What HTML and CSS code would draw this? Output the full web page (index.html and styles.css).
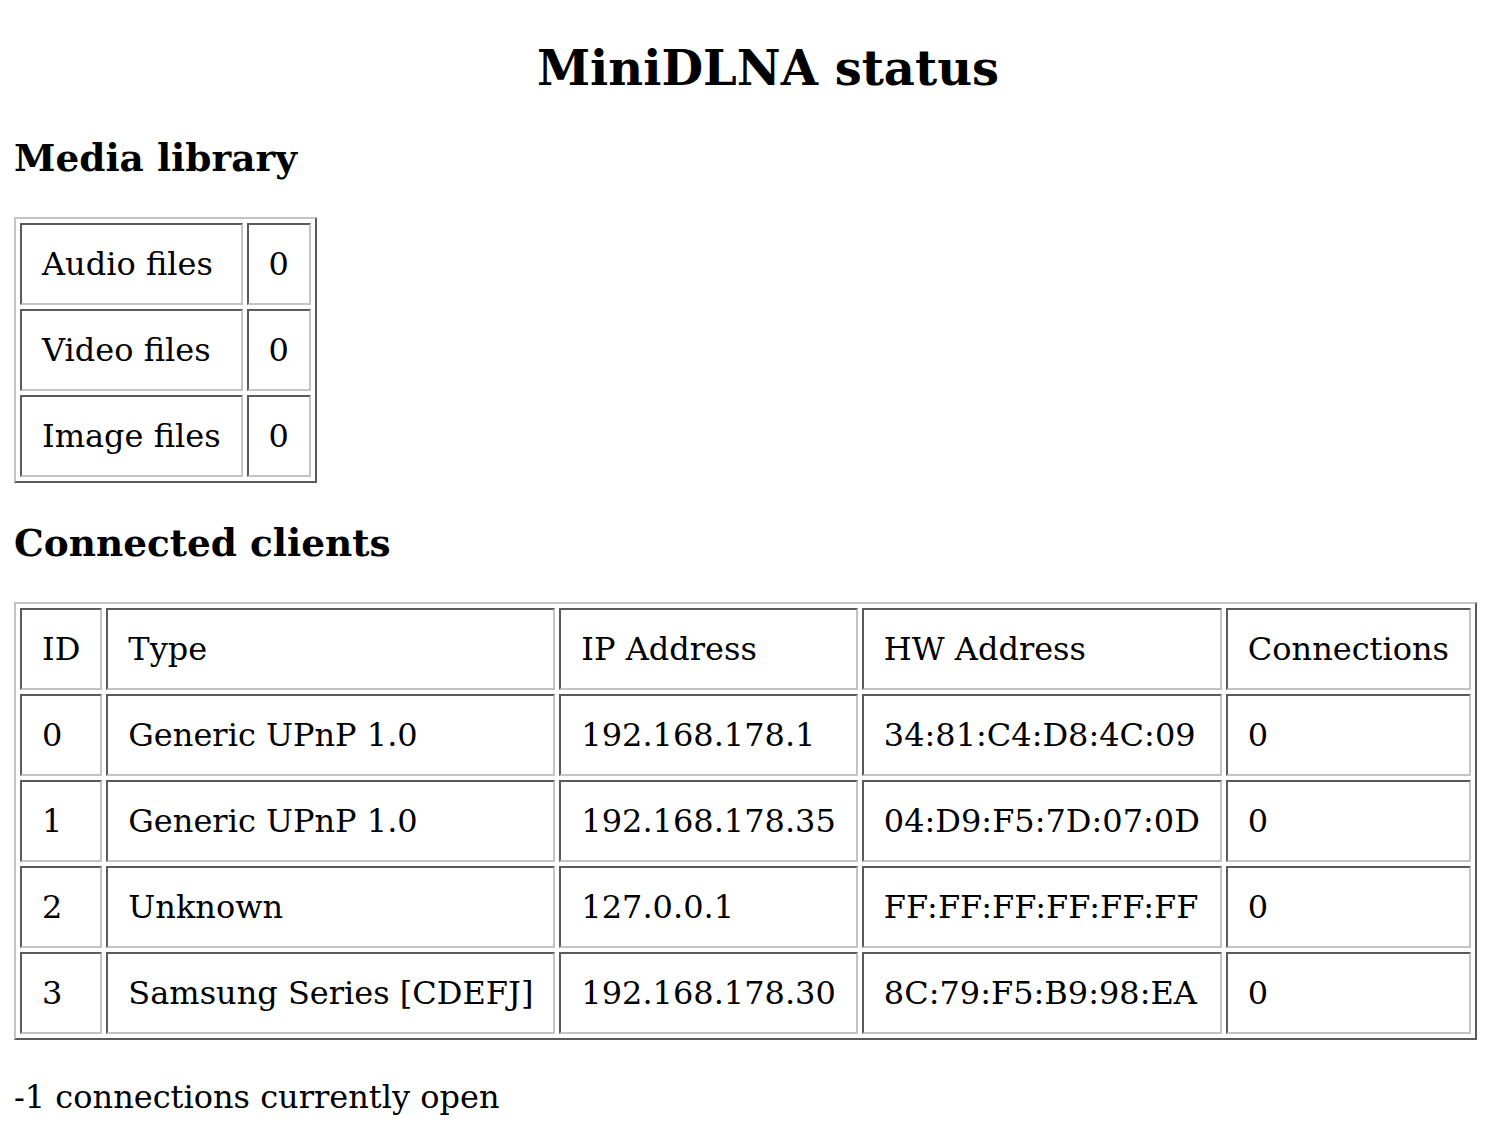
FILE: index.html
```html
<!DOCTYPE html>
<html>
<head>
<meta charset="utf-8">
<title>MiniDLNA status</title>
<link rel="stylesheet" href="styles.css">
</head>
<body>
<div class="title-wrap"><h2 class="title">MiniDLNA status</h2></div>
<h3 class="section">Media library</h3>
<table class="grid">
<tr><td>Audio files</td><td>0</td></tr>
<tr><td>Video files</td><td>0</td></tr>
<tr><td>Image files</td><td>0</td></tr>
</table>
<h3 class="section">Connected clients</h3>
<table class="grid">
<tr><td>ID</td><td>Type</td><td>IP Address</td><td>HW Address</td><td>Connections</td></tr>
<tr><td>0</td><td>Generic UPnP 1.0</td><td>192.168.178.1</td><td>34:81:C4:D8:4C:09</td><td>0</td></tr>
<tr><td>1</td><td>Generic UPnP 1.0</td><td>192.168.178.35</td><td>04:D9:F5:7D:07:0D</td><td>0</td></tr>
<tr><td>2</td><td>Unknown</td><td>127.0.0.1</td><td>FF:FF:FF:FF:FF:FF</td><td>0</td></tr>
<tr><td>3</td><td>Samsung Series [CDEFJ]</td><td>192.168.178.30</td><td>8C:79:F5:B9:98:EA</td><td>0</td></tr>
</table>
<div class="footer"><br>-1 connections currently open</div>
</body>
</html>
```

FILE: styles.css
```css
html { background: #fff; }
body {
  margin: 0 0 0 14px;
  font-family: "DejaVu Serif", serif;
  font-size: 32px;
  color: #000;
}
.title-wrap {
  text-align: center;
  padding-left: 48px;
  padding-right: 16px;
}
.title {
  font-size: 48px;
  font-weight: bold;
  margin: 40px 0 39.84px;
}
.section {
  font-size: 37.44px;
  font-weight: bold;
  margin: 37.44px 0;
}
.grid {
  border-collapse: separate;
  border-spacing: 4px;
  border-style: solid;
  border-width: 2px;
  border-color: #c4c4c4 #5a5a5a #5a5a5a #c4c4c4;
}
.grid td {
  padding: 20px;
  white-space: nowrap;
  border-style: solid;
  border-width: 2px;
  border-color: #5a5a5a #c4c4c4 #c4c4c4 #5a5a5a;
}
```
